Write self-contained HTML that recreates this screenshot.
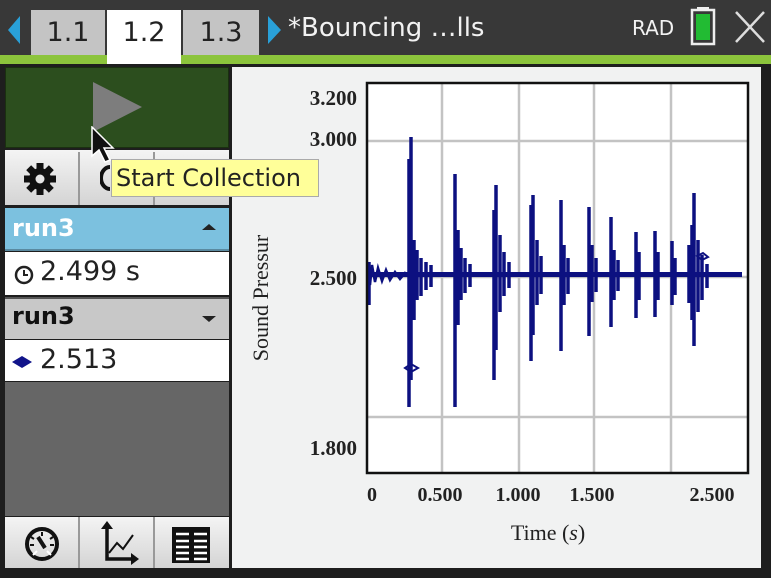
<!DOCTYPE html>
<html><head><meta charset="utf-8">
<style>
body{margin:0;width:771px;height:578px;background:#1e1e1e;overflow:hidden;position:relative;font-family:"DejaVu Sans","Liberation Sans",sans-serif}
div{position:absolute;box-sizing:border-box}
.top{left:0;top:0;width:771px;height:56px;background:#383838}
.tab{top:10px;height:46px;background:#c4c4c4;color:#222;font-size:27px;text-align:center;line-height:46px}
</style></head><body>
<div class="top"></div>
<svg style="position:absolute;left:0;top:0" width="771" height="60">
<polygon points="20,16 20,44 8,30" fill="#29a0d8"/>
<polygon points="268,16 268,44 281,30" fill="#29a0d8"/>
<rect x="692" y="10" width="22" height="34" fill="none" stroke="#eee" stroke-width="2.5"/>
<rect x="697" y="7" width="12" height="4" fill="#eee"/>
<rect x="696" y="14" width="14" height="26" fill="#22bb33"/>
<path d="M736 12 L764 42 M764 12 L736 42" stroke="#ddd" stroke-width="2.5"/>
</svg>
<div class="tab" style="left:31px;width:74px">1.1</div>
<div class="tab" style="left:107px;width:74px;background:#fff;height:50px">1.2</div>
<div class="tab" style="left:183px;width:76px">1.3</div>
<div style="left:288px;top:10px;color:#f2f2f2;font-size:26px;line-height:36px">*Bouncing …lls</div>
<div style="left:632px;top:14px;color:#f2f2f2;font-size:20px;line-height:28px">RAD</div>
<div style="left:0;top:55px;width:771px;height:9px;background:#8cc43c"></div>
<div style="left:107px;top:55px;width:74px;height:9px;background:#fff"></div>

<div style="left:5px;top:67px;width:224px;height:81px;background:#2c4e1e;border:1px solid #1a3010"></div>
<svg style="position:absolute;left:90px;top:82px" width="60" height="60"><polygon points="3,0 52,25 3,50" fill="#7d7d7d"/></svg>
<div style="left:5px;top:150px;width:224px;height:55px;background:linear-gradient(#f4f4f4,#d4d4d4)"></div>
<div style="left:78px;top:152px;width:2px;height:53px;background:#999"></div>
<div style="left:153px;top:152px;width:2px;height:53px;background:#999"></div>
<svg style="position:absolute;left:100px;top:165px" width="12" height="26"><path d="M10 2 A9 11 0 0 0 10 24" stroke="#111" stroke-width="4" fill="none"/></svg>
<svg style="position:absolute;left:22px;top:161px" width="36" height="36" viewBox="0 0 36 36"><g transform="translate(18,18)" fill="#111"><circle r="11"/><g id="t"><rect x="-3.5" y="-16" width="7" height="8"/></g><use href="#t" transform="rotate(45)"/><use href="#t" transform="rotate(90)"/><use href="#t" transform="rotate(135)"/><use href="#t" transform="rotate(180)"/><use href="#t" transform="rotate(225)"/><use href="#t" transform="rotate(270)"/><use href="#t" transform="rotate(315)"/><circle r="4.5" fill="#e6e6e6"/></g></svg>
<div style="left:5px;top:208px;width:224px;height:43px;background:#7cc1df;border-bottom:2px solid #5a8aa0"></div>
<div style="left:12px;top:214px;color:#fff;font-weight:bold;font-size:24px">run3</div>
<svg style="position:absolute;left:200px;top:222px" width="18" height="10"><polygon points="2,8 9,2 16,8" fill="#222"/></svg>
<div style="left:5px;top:252px;width:224px;height:43px;background:#fff"></div>
<svg style="position:absolute;left:13px;top:264px" width="22" height="22"><circle cx="11" cy="11" r="8" fill="none" stroke="#222" stroke-width="2.5"/><path d="M11 6V11H15" stroke="#222" stroke-width="2" fill="none"/></svg>
<div style="left:40px;top:256px;color:#222;font-size:27px">2.499 s</div>
<div style="left:5px;top:297px;width:224px;height:42px;background:#c8c8c8;border-top:2px solid #555"></div>
<div style="left:12px;top:302px;color:#111;font-weight:bold;font-size:24px">run3</div>
<svg style="position:absolute;left:200px;top:314px" width="18" height="10"><polygon points="2,2 9,8 16,2" fill="#222"/></svg>
<div style="left:5px;top:340px;width:224px;height:41px;background:#fff"></div>
<svg style="position:absolute;left:10px;top:354px" width="24" height="16"><polygon points="2,8 12,2 22,8 12,14" fill="#11148a"/></svg>
<div style="left:40px;top:344px;color:#222;font-size:27px">2.513</div>
<div style="left:5px;top:382px;width:224px;height:134px;background:#666"></div>
<div style="left:5px;top:517px;width:224px;height:51px;background:linear-gradient(#f4f4f4,#d4d4d4)"></div>
<div style="left:78px;top:517px;width:2px;height:51px;background:#999"></div>
<div style="left:153px;top:517px;width:2px;height:51px;background:#999"></div>
<svg style="position:absolute;left:5px;top:517px" width="224" height="51">
<circle cx="37" cy="27" r="15" fill="none" stroke="#111" stroke-width="4"/>
<path d="M37 15v4M26 20l3 2M48 20l-3 2M25 28h4M49 28h-4" stroke="#111" stroke-width="2"/>
<path d="M33 20 L40 31" stroke="#111" stroke-width="4"/>
<path d="M28 38 L32 34 M46 38 L42 34" stroke="#fff" stroke-width="2"/>
<path d="M102 8 V42 H130" stroke="#111" stroke-width="3.5" fill="none"/>
<polygon points="96,12 102,4 108,12" fill="#111"/><polygon points="126,36 134,42 126,48" fill="#111"/>
<path d="M104 36 L112 26 L118 32 L128 18" stroke="#111" stroke-width="2" fill="none"/>
<rect x="167" y="10" width="38" height="36" fill="#111"/>
<path d="M171 17h13M189 17h13M171 24h13M189 24h13M171 30h13M189 30h13M171 36h13M189 36h13M171 42h13M189 42h13" stroke="#fff" stroke-width="2.5"/>
</svg>

<div style="left:232px;top:67px;width:529px;height:501px;background:#f1f2f2"></div>
<svg style="position:absolute;left:0;top:0" width="771" height="578">
<rect x="367" y="83" width="381" height="390" fill="#fff"/>
<g stroke="#c3c3c3" stroke-width="2.5">
<line x1="442" y1="83" x2="442" y2="473"/><line x1="519" y1="83" x2="519" y2="473"/><line x1="594" y1="83" x2="594" y2="473"/><line x1="671" y1="83" x2="671" y2="473"/>
<line x1="367" y1="141" x2="748" y2="141"/><line x1="367" y1="277" x2="748" y2="277"/><line x1="367" y1="417" x2="748" y2="417"/>
</g>
<g stroke="#0c1080" fill="none" stroke-width="3.5">
<path stroke-width="2.5" d="M368 262 L370 285 L372 265 L375 282 L378 268 L382 281 L386 270 L390 280 L395 272 L400 279 L405 273 L409 276"/>
<rect x="369" y="272" width="373" height="5" fill="#0c1080" stroke="none"/>
<path d="M369 262 V305"/>
<path d="M409 159 V407 M411 137 V380 M414 240 V320 M417 250 V300 M421 258 V296 M426 262 V290 M431 265 V287"/>
<path d="M455 174 V407 M458 230 V325 M461 248 V300 M465 258 V293 M470 264 V287"/>
<path d="M494 210 V380 M496 185 V350 M500 235 V312 M504 252 V296 M509 262 V288"/>
<path d="M531 205 V361 M533 195 V335 M537 240 V305 M541 256 V294"/>
<path d="M561 200 V351 M564 245 V305 M568 258 V294"/>
<path d="M589 207 V336 M592 245 V302 M596 258 V292"/>
<path d="M611 217 V327 M614 250 V300 M618 260 V291"/>
<path d="M636 232 V318 M639 252 V300"/>
<path d="M655 231 V317 M658 252 V300"/>
<path d="M672 241 V305 M675 258 V295"/>
<path d="M689 245 V303 M692 225 V320 M694 193 V346 M698 240 V312 M702 255 V300 M707 264 V288"/>
<path d="M405 368 L411 364 L418 368 L411 372 Z" stroke-width="2"/>
<path d="M697 256 L703 253 L708 257 L702 260 Z" stroke-width="2"/>
</g>
<rect x="367" y="83" width="381" height="390" fill="none" stroke="#111" stroke-width="2.5"/>
<g font-family="Liberation Serif,DejaVu Serif,serif" font-size="21" font-weight="bold" fill="#222" text-anchor="end">
<text x="357" y="105">3.200</text><text x="357" y="146">3.000</text><text x="357" y="285">2.500</text><text x="357" y="455">1.800</text>
</g>
<g font-family="Liberation Serif,DejaVu Serif,serif" font-size="20" font-weight="bold" fill="#222" text-anchor="middle">
<text x="372" y="501">0</text><text x="440" y="501">0.500</text><text x="518" y="501">1.000</text><text x="592" y="501">1.500</text><text x="712" y="501">2.500</text>
<text x="548" y="540" font-size="22" font-weight="normal">Time (<tspan font-style="italic">s</tspan>)</text>
<text transform="translate(268,298) rotate(-90)" font-size="22" font-weight="normal">Sound Pressur</text>
</g>
</svg>

<div style="left:111px;top:159px;width:208px;height:38px;background:#ffff99;border:1px solid #aaa;font-size:24px;color:#222;line-height:36px;padding-left:4px">Start Collection</div>
<svg style="position:absolute;left:90px;top:126px" width="30" height="40"><polygon points="2,1 2,30 9,24 15,36 20,34 14,22 23,22" fill="#111" stroke="#fff" stroke-width="1.5"/></svg>
</body></html>
